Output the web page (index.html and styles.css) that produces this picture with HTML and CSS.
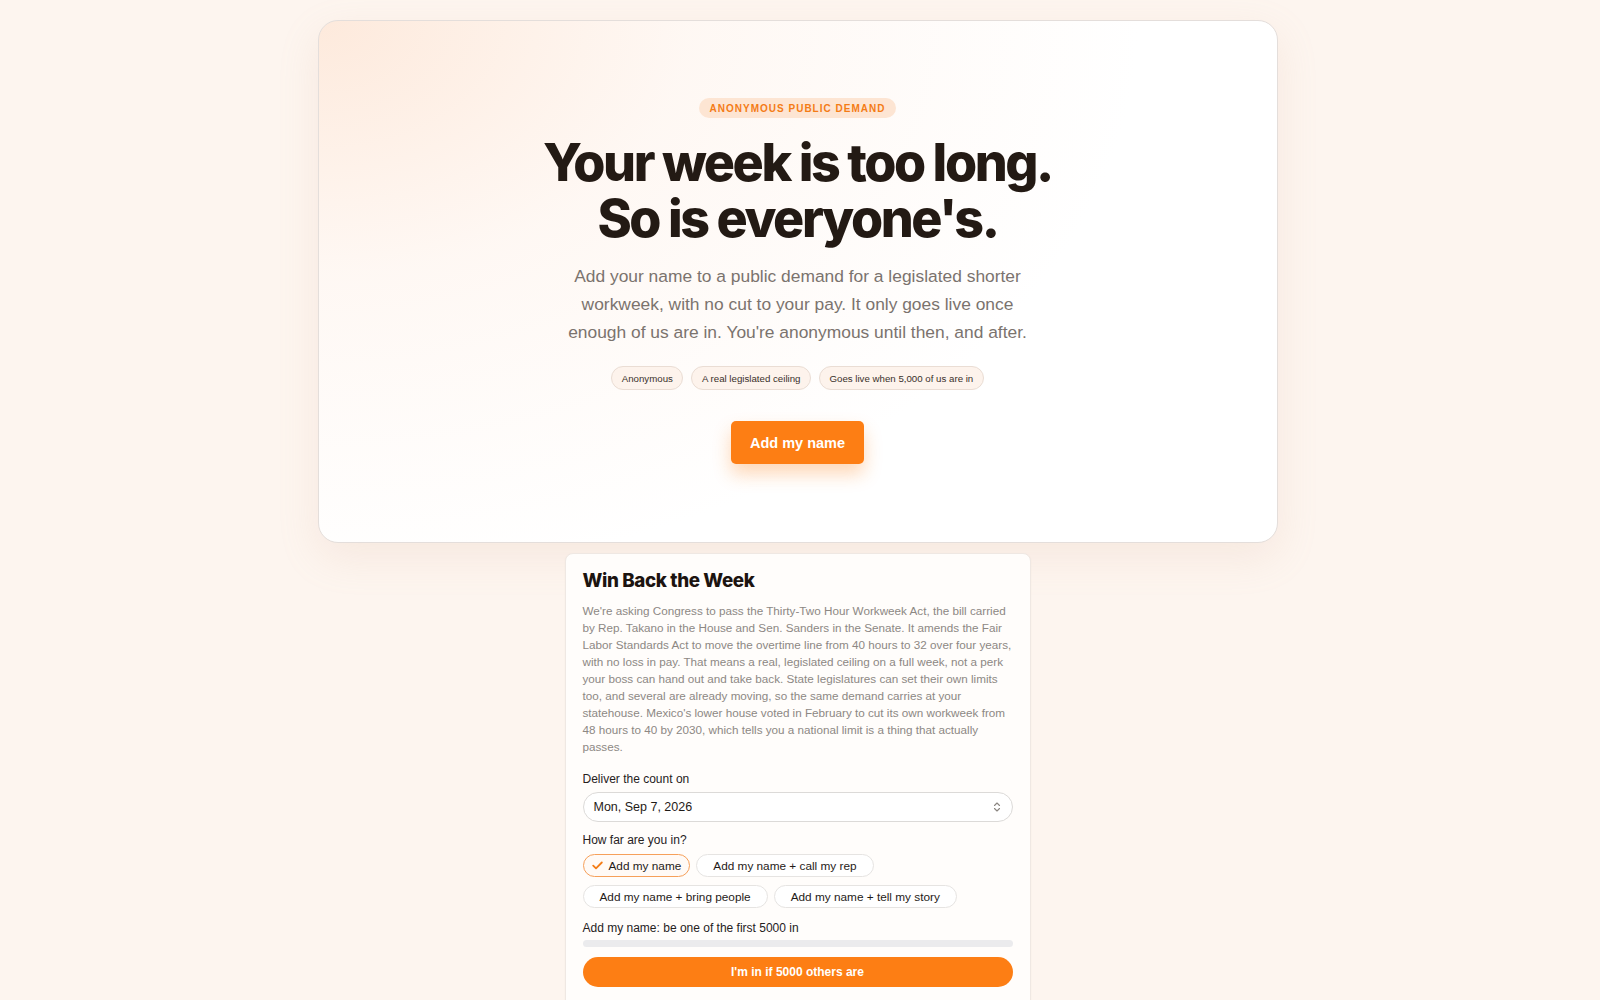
FILE: index.html
```html
<!DOCTYPE html>
<html lang="en">
<head>
<meta charset="utf-8">
<title>Win Back the Week</title>
<link rel="stylesheet" href="styles.css">
</head>
<body>
<main class="page">
  <section class="hero">
    <span class="eyebrow">ANONYMOUS PUBLIC DEMAND</span>
    <h1 class="hero-title">Your week is too long.<br>So is everyone's.</h1>
    <p class="hero-lede">Add your name to a public demand for a legislated shorter workweek, with no cut to your pay. It only goes live once enough of us are in. You're anonymous until then, and after.</p>
    <ul class="chips">
      <li class="chip">Anonymous</li>
      <li class="chip">A real legislated ceiling</li>
      <li class="chip">Goes live when 5,000 of us are in</li>
    </ul>
    <button class="cta" type="button">Add my name</button>
  </section>

  <section class="pledge">
    <h2 class="pledge-title">Win Back the Week</h2>
    <p class="pledge-copy">We're asking Congress to pass the Thirty-Two Hour Workweek Act, the bill carried by Rep. Takano in the House and Sen. Sanders in the Senate. It amends the Fair Labor Standards Act to move the overtime line from 40 hours to 32 over four years, with no loss in pay. That means a real, legislated ceiling on a full week, not a perk your boss can hand out and take back. State legislatures can set their own limits too, and several are already moving, so the same demand carries at your statehouse. Mexico's lower house voted in February to cut its own workweek from 48 hours to 40 by 2030, which tells you a national limit is a thing that actually passes.</p>

    <label class="field-label deliver" for="deliver">Deliver the count on</label>
    <div class="select">
      <span id="deliver">Mon, Sep 7, 2026</span>
      <svg class="select-icon" width="10" height="12" viewBox="0 0 10 12" aria-hidden="true">
        <path d="M2.5 4.5 5 2 7.5 4.5M2.5 7.5 5 10 7.5 7.5" fill="none" stroke="#8a8580" stroke-width="1.1" stroke-linecap="round" stroke-linejoin="round"/>
      </svg>
    </div>

    <p class="field-label">How far are you in?</p>
    <div class="options">
      <button class="option is-selected" type="button">
        <svg class="check" width="11" height="9" viewBox="0 0 11 9" aria-hidden="true"><path d="M1.2 4.6 4 7.3 9.8 1.5" fill="none" stroke="#f47c16" stroke-width="1.8" stroke-linecap="round" stroke-linejoin="round"/></svg>
        Add my name
      </button>
      <button class="option" type="button">Add my name + call my rep</button>
      <button class="option" type="button">Add my name + bring people</button>
      <button class="option" type="button">Add my name + tell my story</button>
    </div>

    <p class="field-label goal">Add my name: be one of the first 5000 in</p>
    <div class="progress"><div class="progress-fill" style="width:0%"></div></div>
    <button class="submit" type="button">I'm in if 5000 others are</button>

    <div class="pledge-foot">
      <p class="foot-note">Nobody sees your name until the count is reached. When it is, the count goes to your representatives on the date you picked.</p>
    </div>
  </section>
</main>
</body>
</html>
```

FILE: styles.css
```css
* { box-sizing: border-box; }

html, body {
  margin: 0;
  padding: 0;
}

body {
  background: #fdf5ef;
  font-family: "Liberation Sans", Arial, sans-serif;
  color: #2a2420;
}

.page {
  display: flex;
  flex-direction: column;
  align-items: center;
  padding: 20px 5px 600px 0;
  gap: 10px;
}

/* ---------- hero ---------- */
.hero {
  width: 960px;
  display: flex;
  flex-direction: column;
  align-items: center;
  padding: 77px 40px 78px;
  border: 1px solid #e4dedb;
  border-radius: 20px;
  background:
    radial-gradient(ellipse 820px 560px at 0% 0%, rgba(253, 230, 214, 0.85) 0%, rgba(254, 242, 234, 0.55) 45%, rgba(255, 255, 255, 0) 100%),
    #ffffff;
  box-shadow: 0 14px 40px rgba(210, 170, 140, 0.16);
}

.eyebrow {
  display: inline-block;
  padding: 5px 11px 4px;
  border-radius: 999px;
  background: #fde5d3;
  color: #f47c16;
  font-size: 10px;
  font-weight: 700;
  letter-spacing: 1px;
  line-height: 11px;
}

.hero-title {
  margin: 17px 0 0;
  font-family: Inter, "Liberation Sans", sans-serif;
  font-weight: 800;
  font-size: 52px;
  line-height: 56px;
  letter-spacing: -0.047em;
  text-align: center;
  color: #231a14;
}

.hero-lede {
  margin: 15px 0 0;
  max-width: 480px;
  font-size: 17.4px;
  line-height: 28px;
  color: #7b736e;
  text-align: center;
}

.chips {
  display: flex;
  gap: 8px;
  list-style: none;
  margin: 20px 0 0;
  padding: 0;
}

.chip {
  height: 24px;
  display: flex;
  align-items: center;
  padding: 0 9.5px;
  border: 1px solid #eaddd4;
  border-radius: 999px;
  background: #fdf3ec;
  color: #3a302a;
  font-size: 9.7px;
}

.cta {
  margin-top: 31px;
  width: 133px;
  height: 43px;
  border: 0;
  border-radius: 5px;
  background: #fd7e14;
  color: #fff;
  font-family: "Liberation Sans", Arial, sans-serif;
  font-size: 14.5px;
  font-weight: 700;
  box-shadow: 0 10px 18px rgba(253, 126, 20, 0.3);
  cursor: pointer;
}

/* ---------- pledge card ---------- */
.pledge {
  width: 466px;
  padding: 16px 17px 18px;
  border: 1px solid #efe8e3;
  border-radius: 8px;
  background: #fffdfb;
  box-shadow: 0 1px 2px rgba(120, 90, 60, 0.05);
}

.pledge-title {
  margin: 0;
  font-family: Inter, "Liberation Sans", sans-serif;
  font-weight: 800;
  font-size: 18.8px;
  line-height: 22px;
  letter-spacing: -0.02em;
  color: #1c1410;
}

.pledge-copy {
  margin: 10px 0 0;
  font-size: 11.7px;
  line-height: 17px;
  color: #8d8884;
}

.field-label {
  display: block;
  margin: 13px 0 0;
  font-size: 12px;
  line-height: 15px;
  color: #26211d;
}

.field-label.deliver { margin-top: 17px; }

.select {
  margin-top: 5px;
  height: 30px;
  display: flex;
  align-items: center;
  justify-content: space-between;
  padding: 0 10px;
  border: 1px solid #dcdad8;
  border-radius: 15px;
  background: #fff;
  font-size: 12.5px;
  color: #1f1b18;
}

.select + .field-label { margin-top: 11px; }

.options {
  margin-top: 6px;
  display: flex;
  flex-wrap: wrap;
  gap: 8px 6px;
}

.option {
  height: 23px;
  display: inline-flex;
  align-items: center;
  gap: 6px;
  padding: 0 16px;
  border: 1px solid #e6e4e2;
  border-radius: 999px;
  background: #fff;
  font-family: "Liberation Sans", Arial, sans-serif;
  font-size: 11.8px;
  color: #1f1b18;
  cursor: pointer;
}

.option.is-selected {
  padding: 0 8px 0 8px;
  border-color: #f6a05a;
  background: #fffaf6;
}

.goal { margin-top: 13px; }

.progress {
  margin-top: 4px;
  height: 7px;
  border-radius: 4px;
  background: #ebebed;
  overflow: hidden;
}

.progress-fill {
  height: 100%;
  background: #fd7e14;
}

.submit {
  margin-top: 10px;
  width: 100%;
  height: 30px;
  border: 0;
  border-radius: 15px;
  background: #fd7e14;
  color: #fff;
  font-family: "Liberation Sans", Arial, sans-serif;
  font-size: 12px;
  font-weight: 700;
  cursor: pointer;
}

.pledge-foot {
  margin-top: 14px;
}

.foot-note {
  margin: 0;
  font-size: 11px;
  line-height: 16px;
  color: #8d8884;
}
```
